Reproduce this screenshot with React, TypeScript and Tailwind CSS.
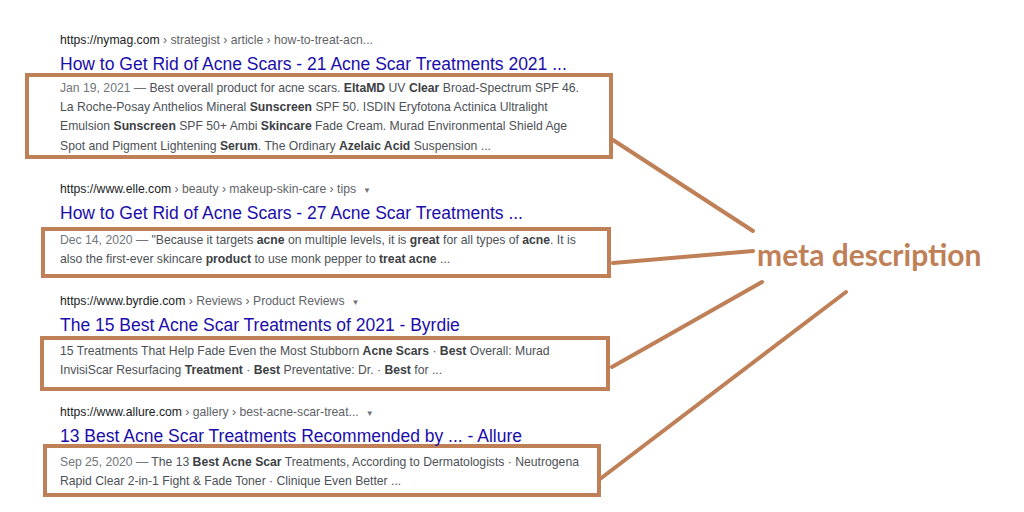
import React from 'react'

type Seg = { t: string; b?: boolean }

interface Result {
  host: string
  path: string
  menu: boolean
  title: string
  date?: string
  lines: Seg[][]
  box: string
  inner: string
  gap: string
}

// plain text with **bold** words split into segments
const seg = (s: string): Seg[] =>
  s.split('**').map((t, i) => ({ t, b: i % 2 === 1 })).filter(p => p.t)

const results: Result[] = [
  {
    host: 'https://nymag.com',
    path: ' › strategist › article › how-to-treat-acn...',
    menu: false,
    title: 'How to Get Rid of Acne Scars - 21 Acne Scar Treatments 2021 ...',
    date: 'Jan 19, 2021 — ',
    lines: [
      seg('Best overall product for acne scars. **EltaMD** UV **Clear** Broad-Spectrum SPF 46.'),
      seg('La Roche-Posay Anthelios Mineral **Sunscreen** SPF 50. ISDIN Eryfotona Actinica Ultralight'),
      seg('Emulsion **Sunscreen** SPF 50+ Ambi **Skincare** Fade Cream. Murad Environmental Shield Age'),
      seg('Spot and Pigment Lightening **Serum**. The Ordinary **Azelaic Acid** Suspension ...')
    ],
    box: 'ml-[-35px] w-[588px] h-[86px] mt-0',
    inner: 'pl-[31px] pt-[2px]',
    gap: 'pt-[30px]'
  },
  {
    host: 'https://www.elle.com',
    path: ' › beauty › makeup-skin-care › tips',
    menu: true,
    title: 'How to Get Rid of Acne Scars - 27 Acne Scar Treatments ...',
    date: 'Dec 14, 2020 — ',
    lines: [
      seg('"Because it targets **acne** on multiple levels, it is **great** for all types of **acne**. It is'),
      seg('also the first-ever skincare **product** to use monk pepper to **treat acne** ...')
    ],
    box: 'ml-[-19px] w-[570px] h-[51px] mt-[5px]',
    inner: 'pl-[15px] pt-0',
    gap: 'pt-[20px]'
  },
  {
    host: 'https://www.byrdie.com',
    path: ' › Reviews › Product Reviews',
    menu: true,
    title: 'The 15 Best Acne Scar Treatments of 2021 - Byrdie',
    lines: [
      seg('15 Treatments That Help Fade Even the Most Stubborn **Acne Scars** · **Best** Overall: Murad'),
      seg('InvisiScar Resurfacing **Treatment** · **Best** Preventative: Dr. · **Best** for ...')
    ],
    box: 'ml-[-20px] w-[570px] h-[55px] mt-[2px]',
    inner: 'pl-[16px] pt-[2px]',
    gap: 'pt-[13px]'
  },
  {
    host: 'https://www.allure.com',
    path: ' › gallery › best-acne-scar-treat...',
    menu: true,
    title: '13 Best Acne Scar Treatments Recommended by ... - Allure',
    date: 'Sep 25, 2020 — ',
    lines: [
      seg('The 13 **Best Acne Scar** Treatments, According to Dermatologists · Neutrogena'),
      seg('Rapid Clear 2-in-1 Fight & Fade Toner · Clinique Even Better ...')
    ],
    box: 'ml-[-17px] w-[558px] h-[53px] mt-[-1px]',
    inner: 'pl-[13px] pt-[5px]',
    gap: 'pt-[11px]'
  }
]

const ACCENT = '#bf7f57'

// callout strokes from the boxes to the label
const pointers = [
  [613, 140, 753, 231],
  [613, 263, 753, 251],
  [612, 367, 762, 282],
  [600, 479, 846, 292]
]

function SearchResult({ r }: { r: Result }) {
  return (
    <div className={r.gap}>
      <div className="h-[20px] text-[12.2px] leading-[20px] whitespace-pre">
        <span className="text-[#202124]">{r.host}</span>
        <span className="text-[#5f6368]">{r.path}</span>
        {r.menu && (
          <span className="ml-[7px] text-[8px] leading-none text-[#70757a]">▼</span>
        )}
      </div>
      <div className="mt-[5px] h-[18px] text-[17.5px] leading-[18px] text-[#1a0dab] whitespace-nowrap">
        {r.title}
      </div>
      <div className={`border-[4px] border-[#bf7f57] ${r.box}`}>
        <div className={`text-[12.2px] leading-[19.2px] text-[#4d5156] ${r.inner}`}>
          {r.lines.map((line, i) => (
            <div key={i} className="whitespace-pre">
              {i === 0 && r.date && (
                <span className="text-[#70757a]">{r.date}</span>
              )}
              {line.map((p, j) =>
                p.b ? (
                  <b key={j} className="font-bold text-[#3c4043]">{p.t}</b>
                ) : (
                  <span key={j}>{p.t}</span>
                )
              )}
            </div>
          ))}
        </div>
      </div>
    </div>
  )
}

export default function App() {
  return (
    <div
      className="relative w-[1024px] h-[512px] overflow-hidden bg-white"
      style={{ fontFamily: '"Liberation Sans", Arial, sans-serif' }}
    >
      <div className="pl-[60px]">
        {results.map((r, i) => (
          <SearchResult key={i} r={r} />
        ))}
      </div>

      <svg
        className="absolute inset-0 pointer-events-none"
        width={1024}
        height={512}
      >
        {pointers.map(([x1, y1, x2, y2], i) => (
          <line
            key={i}
            x1={x1}
            y1={y1}
            x2={x2}
            y2={y2}
            stroke={ACCENT}
            strokeWidth={4}
            strokeLinecap="round"
          />
        ))}
      </svg>

      <div
        className="absolute left-[757px] top-[235px] text-[30px] leading-[38px] font-bold text-[#bf7f57] whitespace-nowrap"
        style={{ fontFamily: 'Lato, "Open Sans", sans-serif' }}
      >
        meta description
      </div>
    </div>
  )
}
